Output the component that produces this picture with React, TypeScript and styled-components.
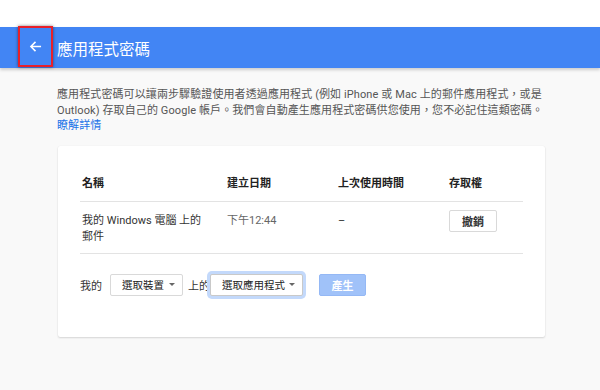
import React from "react";
import styled, { createGlobalStyle } from "styled-components";

const Global = createGlobalStyle`
  html, body { margin: 0; padding: 0; background: #f9f9f9; }
  body { font-family: Roboto, "Noto Sans CJK TC", sans-serif; width: 600px; height: 390px; overflow: hidden; }
`;

const Page = styled.div`
  width: 600px;
  height: 390px;
  display: flex;
  flex-direction: column;
  background: #f9f9f9;
`;

const TopGap = styled.div`
  height: 27px;
  background: #ffffff;
  flex: none;
`;

const Header = styled.header`
  height: 41px;
  background: #4285f4;
  display: flex;
  align-items: center;
  box-shadow: 0 2px 3px rgba(0, 0, 0, 0.18);
  position: relative;
  flex: none;
`;

const BackButton = styled.button`
  position: relative;
  width: 35px;
  height: 41px;
  margin-left: 18px;
  margin-top: -3px;
  padding: 0;
  background: transparent;
  border: 2px solid #e8202a;
  box-shadow: 0 0 3px rgba(0, 0, 0, 0.5);
  display: flex;
  align-items: center;
  justify-content: center;
  cursor: pointer;
  box-sizing: border-box;
`;

const Title = styled.h1`
  margin: 0 0 0 4px;
  font-size: 15.5px;
  font-weight: 400;
  color: #ffffff;
`;

const Content = styled.main`
  padding: 19px 0 0 57px;
  width: 495px;
`;

const Intro = styled.p`
  margin: 0;
  font-size: 11px;
  line-height: 15.5px;
  letter-spacing: 0.1px;
  color: #555555;
  white-space: nowrap;
`;

const LearnMore = styled.a`
  color: #1a73e8;
  text-decoration: none;
`;

const Card = styled.section`
  margin: 12px 0 0 1px;
  width: 487px;
  height: 191px;
  background: #ffffff;
  border-radius: 2px;
  box-shadow: 0 1px 2px rgba(0, 0, 0, 0.14), 0 0 1px rgba(0, 0, 0, 0.08);
  padding: 30px 22px 0 22px;
  box-sizing: border-box;
`;

const Row = styled.div<{ $head?: boolean }>`
  display: grid;
  grid-template-columns: 145px 111px 111px 1fr;
  border-bottom: 1px solid #e3e3e3;
  padding: ${(p) => (p.$head ? "0 0 9px 2px" : "11px 0 8px 2px")};
  font-size: 11px;
  line-height: 16px;
  color: ${(p) => (p.$head ? "#222222" : "#333333")};
  font-weight: ${(p) => (p.$head ? 700 : 400)};
`;

const Cell = styled.div<{ $muted?: boolean }>`
  color: ${(p) => (p.$muted ? "#666666" : "inherit")};
  padding-right: 20px;
`;

const RevokeButton = styled.button`
  display: block;
  width: 48px;
  height: 22px;
  margin-top: -3px;
  background: #ffffff;
  border: 1px solid #d9d9d9;
  border-radius: 2px;
  font-family: inherit;
  font-size: 11px;
  font-weight: 700;
  color: #333333;
  padding: 0;
`;

const FormRow = styled.div`
  display: flex;
  align-items: center;
  margin-top: 20px;
  font-size: 11px;
  color: #333333;
  white-space: nowrap;
`;

const Label = styled.span<{ $gap: number }>`
  margin-right: ${(p) => p.$gap}px;
`;

const Select = styled.div<{ $width: number; $focus?: boolean }>`
  width: ${(p) => p.$width}px;
  height: 22px;
  box-sizing: border-box;
  border: 1px solid ${(p) => (p.$focus ? "#c9c9c9" : "#d9d9d9")};
  border-radius: 2px;
  background: #ffffff;
  display: flex;
  align-items: center;
  justify-content: space-between;
  padding: 0 7px 0 11px;
  font-size: 10.5px;
  color: #222222;
  box-shadow: ${(p) => (p.$focus ? "0 0 0 3px #c3d9fb" : "none")};
  margin-right: ${(p) => (p.$focus ? 16 : 5)}px;
`;

const Caret = styled.span`
  width: 0;
  height: 0;
  border-left: 3px solid transparent;
  border-right: 3px solid transparent;
  border-top: 3px solid #666666;
`;

const GenerateButton = styled.button`
  width: 47px;
  height: 22px;
  background: #a0c2f9;
  border: 1px solid #94b8f5;
  border-radius: 2px;
  color: #ffffff;
  font-family: inherit;
  font-size: 11px;
  font-weight: 700;
  padding: 0;
`;

export default function App() {
  return (
    <Page>
      <Global />
      <TopGap />
      <Header>
        <BackButton aria-label="返回">
          <svg width="13" height="13" viewBox="0 0 14 14">
            <path d="M13 7H2.5M7 2L2 7l5 5" fill="none" stroke="#ffffff" strokeWidth="1.6" />
          </svg>
        </BackButton>
        <Title>應用程式密碼</Title>
      </Header>
      <Content>
        <Intro>
          應用程式密碼可以讓兩步驟驗證使用者透過應用程式 (例如 iPhone 或 Mac 上的郵件應用程式，或是
          <br />
          Outlook) 存取自己的 Google 帳戶。我們會自動產生應用程式密碼供您使用，您不必記住這類密碼。
          <br />
          <LearnMore href="#">瞭解詳情</LearnMore>
        </Intro>
        <Card>
          <Row $head>
            <Cell>名稱</Cell>
            <Cell>建立日期</Cell>
            <Cell>上次使用時間</Cell>
            <Cell>存取權</Cell>
          </Row>
          <Row>
            <Cell>我的 Windows 電腦 上的郵件</Cell>
            <Cell $muted>下午12:44</Cell>
            <Cell>–</Cell>
            <Cell>
              <RevokeButton>撤銷</RevokeButton>
            </Cell>
          </Row>
          <FormRow>
            <Label $gap={8}>我的</Label>
            <Select $width={73}>
              選取裝置
              <Caret />
            </Select>
            <Label $gap={0}>上的</Label>
            <Select $width={93} $focus>
              選取應用程式
              <Caret />
            </Select>
            <GenerateButton>產生</GenerateButton>
          </FormRow>
        </Card>
      </Content>
    </Page>
  );
}
